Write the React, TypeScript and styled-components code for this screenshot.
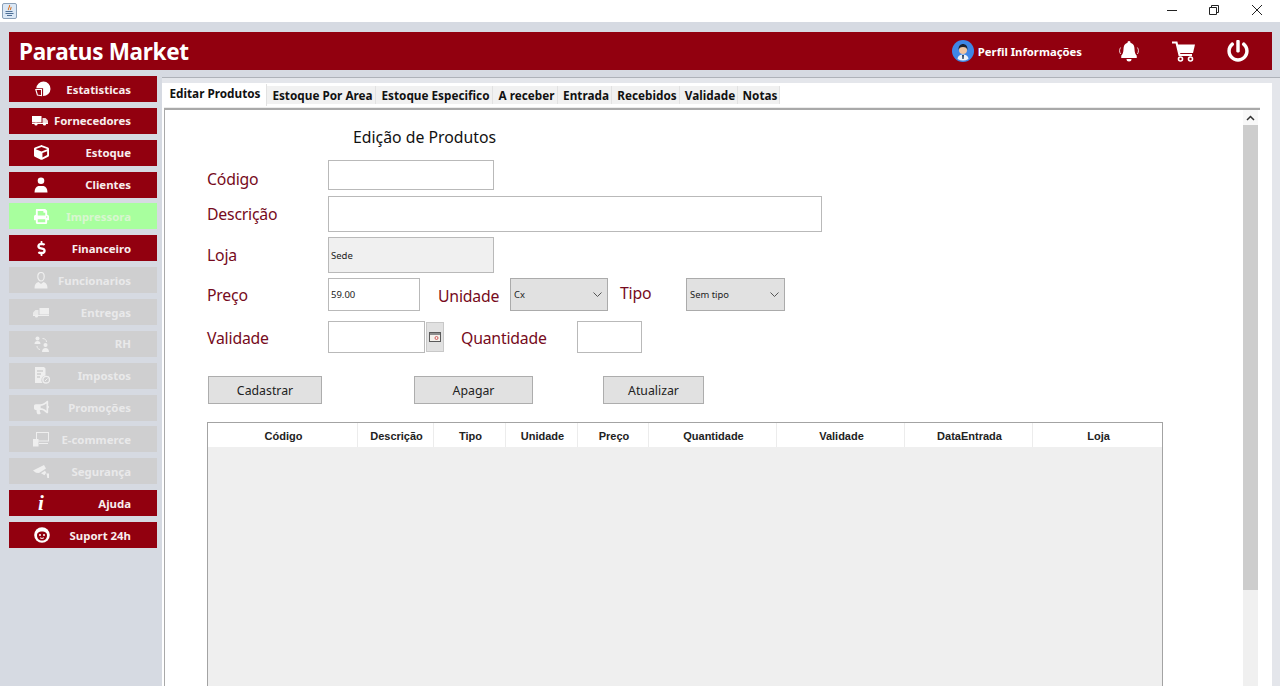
import React from "react";
import styled, { createGlobalStyle } from "styled-components";
import { FaCube, FaPrint, FaDollarSign, FaBullhorn, FaPowerOff } from "react-icons/fa";

const Global = createGlobalStyle`
  html, body { margin: 0; padding: 0; overflow: hidden; }
  body { font-family: "Noto Sans", "DejaVu Sans", sans-serif; background: #d6dae2; }
  * { box-sizing: border-box; }
`;

const Page = styled.div`
  width: 1280px; height: 686px; overflow: hidden;
  display: flex; flex-direction: column; background: #d6dae2;
`;
const TitleBar = styled.div`
  height: 22px; flex: none; background: #fff;
  display: flex; align-items: center; justify-content: space-between; padding: 0 16px 0 2px;
`;
const WindowControls = styled.div`
  display: flex; align-items: center; gap: 30px; color: #222; margin-top: -2px;
`;
const Body = styled.div`
  flex: 1; min-height: 0; display: flex; flex-direction: column; padding: 10px 0 0 9px;
`;
const Header = styled.header`
  height: 38px; flex: none; margin-right: 8px; background: #92000f; color: #fff;
  display: flex; align-items: center; padding: 0 23px 0 10px;
`;
const Brand = styled.div`
  font-size: 22.5px; font-weight: 700; flex: 1; letter-spacing: -0.3px;
`;
const Profile = styled.div`
  display: flex; align-items: center; gap: 4px; font-size: 11.3px; font-weight: 700; margin-right: 36px;
`;
const HeaderIcons = styled.div`
  display: flex; align-items: center; gap: 32px; color: #fff;
`;
const Content = styled.div`
  flex: 1; min-height: 0; display: flex; margin-top: 6px;
`;
const Sidebar = styled.nav`
  width: 148px; flex: none; display: flex; flex-direction: column; gap: 5.86px;
`;
const SideButton = styled.div<{ $state: "on" | "off" | "active" }>`
  height: 26px; flex: none; display: flex; align-items: center; justify-content: space-between;
  padding: 0 26px 0 22px; font-size: 11.4px; font-weight: 700; white-space: nowrap;
  background: ${(p) => (p.$state === "on" ? "#92000f" : p.$state === "active" ? "#a8ff9e" : "#cfcfd0")};
  color: ${(p) => (p.$state === "on" ? "#f8eeee" : p.$state === "active" ? "#d8f6d0" : "#e9e9ea")};
`;
const SideIcon = styled.span<{ $dim?: boolean }>`
  width: 20px; display: flex; justify-content: center; align-items: center; font-size: 15px;
  color: ${(p) => (p.$dim ? "#efefef" : "#fff")};
`;
const InfoGlyph = styled.span`
  font: italic 700 21px/20px "Liberation Serif", serif; color: #fff;
`;
const Main = styled.main`
  flex: 1; min-width: 0; margin: 1px 0 0 5px; border-top: 1px solid #aeb2b9;
  padding: 5px 8px 0 0; background: #e4e6eb; display: flex;
`;
const Panel = styled.div`
  flex: 1; min-width: 0; background: #fff; padding: 0 12px 0 2px; display: flex; flex-direction: column;
`;
const TabStrip = styled.div`
  height: 25px; flex: none; display: flex; align-items: flex-start; padding-top: 3px;
  border-bottom: 1px solid #ececec;
`;
const Tab = styled.div<{ $active?: boolean; $w: number }>`
  width: ${(p) => p.$w}px;
  height: ${(p) => (p.$active ? "22px" : "18px")};
  margin-top: ${(p) => (p.$active ? "-2px" : "0")};
  background: ${(p) => (p.$active ? "#fff" : "#f1f1f1")};
  border-right: 1px solid #e2e2e2;
  color: #111; font-size: 11.75px; font-weight: 700; white-space: nowrap;
  display: flex; align-items: center; justify-content: center;
  padding: ${(p) => (p.$active ? "0 0 4px 0" : "0 0 0 3px")};
`;
const Workspace = styled.div`
  flex: 1; min-height: 0; display: flex; border-top: 2px solid #a9a9a9; border-left: 1px solid #a9a9a9;
`;
const Form = styled.div`
  flex: 1; min-width: 0; padding-left: 42px; display: flex; flex-direction: column; overflow: hidden;
`;
const FormTitle = styled.h1`
  height: 50px; flex: none; margin: 0; padding: 16px 0 0 146px; font-size: 15.8px; line-height: 22px; font-weight: 400; color: #111;
`;
const Row = styled.div<{ $h: number; $gap: number }>`
  height: ${(p) => p.$h}px; margin-bottom: ${(p) => p.$gap}px; flex: none; display: flex; align-items: center;
`;
const Label = styled.label<{ $w?: number; $ml?: number; $dy?: number }>`
  width: ${(p) => p.$w ?? 121}px; margin-left: ${(p) => p.$ml ?? 0}px; flex: none;
  font-size: 15.8px; letter-spacing: -0.2px; color: #760a20; position: relative; top: ${(p) => p.$dy ?? 0}px; white-space: nowrap;
`;
const Field = styled.input<{ $w: number; $gray?: boolean }>`
  width: ${(p) => p.$w}px; height: 100%; border: 1px solid #b9b9b9; padding: 0 2px;
  font: 9.5px "Noto Sans", sans-serif; color: #222; outline: none;
  background: ${(p) => (p.$gray ? "#f0f0f0" : "#fff")};
`;
const CalButton = styled.div`
  width: 18px; height: 30px; margin-left: 1px; background: #e1e1e1; border: 1px solid #c8c8c8;
  display: flex; align-items: center; justify-content: center;
`;
const Select = styled.div<{ $w: number; $ml?: number }>`
  width: ${(p) => p.$w}px; height: 100%; margin-left: ${(p) => p.$ml ?? 0}px; flex: none;
  background: #e1e1e1; border: 1px solid #ababab; color: #222; font-size: 9.4px;
  display: flex; align-items: center; justify-content: space-between; padding: 0 5px 0 3px;
`;
const ButtonRow = styled.div`
  height: 28px; margin: 0 0 18px 1px; flex: none; display: flex;
`;
const ActionButton = styled.div<{ $w: number; $mr?: number }>`
  width: ${(p) => p.$w}px; margin-right: ${(p) => p.$mr ?? 0}px; background: #e1e1e1; border: 1px solid #adadad;
  font-size: 12.3px; color: #222; display: flex; align-items: center; justify-content: center;
`;
const Table = styled.div`
  width: 956px; flex: 1; min-height: 300px; border: 1px solid #a3a3a3; background: #efefef;
`;
const TableHead = styled.div`
  height: 24px; background: #fff; display: grid;
  grid-template-columns: 150px 76px 72px 72px 71px 128px 128px 128px 129px;
`;
const HeadCell = styled.div`
  border-right: 1px solid #ececec; font: 700 11px "Liberation Sans", Arial, sans-serif; color: #222;
  display: flex; align-items: center; justify-content: center; padding: 2px 0 0 2px;
  &:last-child { border-right: none; }
`;
const Scrollbar = styled.div`
  width: 15px; flex: none; margin-right: 2px; background: #f0f0f0; display: flex; flex-direction: column;
`;
const ScrollArrow = styled.div`
  height: 15px; display: flex; align-items: center; justify-content: center; background: #f8f8f8;
`;
const ScrollThumb = styled.div`
  height: 465px; background: #cdcdcd;
`;

const JavaIcon = () => (
  <svg width="15" height="16" viewBox="0 0 15 16">
    <rect x="0.5" y="0.5" width="14" height="15" rx="1.5" fill="#dbe8f6" stroke="#8aa0b8" />
    <path d="M7.500 2c1 2-2 3-1 5M9 4c.5 1-1 2-.5 3" stroke="#d9772a" strokeWidth="1.100" fill="none" />
    <path d="M3.500 8.500h7M3.500 10.500h8M5 12.500h5" stroke="#4d6f96" strokeWidth="1" fill="none" />
  </svg>
);

const Chevron = () => (
  <svg width="9" height="5" viewBox="0 0 9 5"><path d="M.5.500l4 4 4-4" fill="none" stroke="#555" strokeWidth="1" /></svg>
);

const Avatar = () => (
  <svg width="22" height="22" viewBox="0 0 22 22">
    <circle cx="11" cy="11" r="11" fill="#3f87e6" />
    <path d="M5.500 19c.5-3.500 3-4.500 5.500-4.500s5 1 5.500 4.500a11 11 0 0 1-11 0z" fill="#eef3f7" />
    <path d="M10 15h2l-.4 4h-1.200z" fill="#27425f" />
    <circle cx="11" cy="10" r="4" fill="#f0c6a0" />
    <path d="M6.600 10c-.5-4 2-6 4.400-6s5 2 4.400 6c-.5-2-1.500-3-4.400-3s-3.900 1-4.400 3z" fill="#1e2430" />
  </svg>
);

const Bell = () => (
  <svg width="22" height="22" viewBox="0 0 22 22" fill="#fff">
    <path d="M11 1a1.500 1.500 0 0 1 1.500 1.700C15.500 3.500 16.500 6 16.500 9c0 3.500 1 5.500 2.500 7H3c1.500-1.500 2.500-3.500 2.500-7 0-3 1-5.500 4-6.300A1.500 1.500 0 0 1 11 1z" />
    <rect x="3" y="16" width="16" height="2" rx="1" />
    <path d="M8.500 19h5a2.500 2.500 0 0 1-5 0z" />
    <path d="M2.600 7.500C1.200 9.500 1.200 12 2.600 14M19.400 7.500c1.400 2 1.400 4.500 0 6.500" fill="none" stroke="#fff" strokeWidth="1" opacity="0.8" />
  </svg>
);

const Cart = () => (
  <svg width="23" height="21" viewBox="0 0 23 21">
    <path d="M0 1.500h4.500l3 12.500h12.500" fill="none" stroke="#fff" strokeWidth="2.200" />
    <path d="M5.500 3.500H23l-2 8.500H7.500z" fill="#fff" />
    <circle cx="8.500" cy="18" r="2" fill="none" stroke="#fff" strokeWidth="1.600" />
    <circle cx="18.500" cy="18" r="2" fill="none" stroke="#fff" strokeWidth="1.600" />
  </svg>
);

const Pie = () => (
  <svg width="16" height="16" viewBox="0 0 16 16" style={{ marginLeft: 3 }}>
    <path d="M8.500 0.500a7.200 7.200 0 1 1-.4 14.400V7.200H1.300A7.200 7.200 0 0 1 8.500 0.500z" fill="currentColor" />
    <path d="M.8 8.500h5.700v6.200L2.400 14z" fill="none" stroke="currentColor" strokeWidth="1.100" />
  </svg>
);
const Truck = ({ flip }: { flip?: boolean }) => (
  <svg width="16" height="11" viewBox="0 0 16 11" style={flip ? { transform: "scaleX(-1)" } : { marginLeft: -3 }}>
    <rect x="0" y="1" width="9.500" height="6.500" fill="currentColor" />
    <path d="M10.500 3h3l2.500 2.500v2.500h-5.500z" fill="currentColor" opacity="0.85" />
    <rect x="0" y="8" width="16" height="1" fill="currentColor" />
    <circle cx="12.500" cy="9" r="1.600" fill="currentColor" />
    {!flip && <circle cx="4" cy="9" r="1.600" fill="currentColor" />}
  </svg>
);
const Person = () => (
  <svg width="14" height="16" viewBox="0 0 14 16" fill="currentColor">
    <circle cx="7" cy="3.800" r="3.300" />
    <path d="M.5 15.500c.2-4 1.500-6 3.800-6.500h5.400c2.300.5 3.600 2.500 3.800 6.500z" />
  </svg>
);
const Employee = () => (
  <svg width="14" height="17" viewBox="0 0 14 17" fill="currentColor">
    <path d="M3.800 4.500c0-2.500 1.400-4 3.200-4s3.200 1.500 3.200 4-1.400 4.500-3.200 4.500-3.200-2-3.200-4.500z" fill="none" stroke="currentColor" strokeWidth="1.200" />
    <path d="M.5 16.500c0-4 1.500-6 4-6.500l2.500 2 2.500-2c2.500.5 4 2.500 4 6.500z" />
  </svg>
);
const Staff = () => (
  <svg width="16" height="16" viewBox="0 0 16 16" fill="currentColor" style={{ marginLeft: 2 }}>
    <circle cx="3.500" cy="2.500" r="2" />
    <path d="M.5 8c0-2 1.200-3 3-3s3 1 3 3z" />
    <circle cx="11.500" cy="9" r="2" />
    <path d="M8 16c0-2.500 1.500-4 3.500-4s3.500 1.500 3.500 4z" />
    <path d="M8.500 2.500c2.500 0 4 1.500 4 3.500M3 10c0 2 1 3 3 3.500" fill="none" stroke="currentColor" strokeWidth="1" />
  </svg>
);
const TaxDoc = () => (
  <svg width="15" height="17" viewBox="0 0 15 17" fill="currentColor" style={{ marginLeft: 2 }}>
    <path d="M0 0h9l1.500 1.500v7a4.500 4.500 0 0 0-3 7.500H0z" />
    <path d="M2 4h6M2 7h4M2 10h3" stroke="#cfcfd0" strokeWidth="1.300" />
    <circle cx="11.200" cy="12.700" r="3.300" fill="none" stroke="currentColor" strokeWidth="1.400" />
    <path d="M10 14l2.500-2.500" stroke="currentColor" strokeWidth="1" />
  </svg>
);
const Monitor = () => (
  <svg width="16" height="16" viewBox="0 0 16 16" fill="none" stroke="currentColor">
    <rect x="3.500" y="1.500" width="12" height="8.500" strokeWidth="1" />
    <path d="M6 12.500h9" strokeWidth="1" />
    <rect x="0" y="8" width="5.500" height="7.500" fill="currentColor" stroke="none" />
  </svg>
);
const Camera = () => (
  <svg width="16" height="13" viewBox="0 0 16 13" fill="currentColor">
    <path d="M0 5.500L11 0l2 3.500-7 4.500L3 7.800z" />
    <path d="M8 8.200l4-2.400 1.500 2.400.8 4.800h1.700V8.500h-1.500L13 8l-1.500 2.200z" />
  </svg>
);
const SupportFace = () => (
  <svg width="16" height="16" viewBox="0 0 16 16" style={{ marginLeft: 2 }}>
    <circle cx="8" cy="8" r="7.800" fill="#fff" />
    <path d="M3 8.500C3 5.500 5 4.500 8 4.500s5 1 5 4-2 5-5 5-5-2-5-5z" fill="#92000f" />
    <circle cx="6" cy="8" r="1" fill="#fff" />
    <circle cx="10" cy="8" r="1" fill="#fff" />
    <path d="M6 10.700c1 .9 3 .9 4 0" stroke="#fff" strokeWidth="1" fill="none" />
  </svg>
);

type SideState = "on" | "off" | "active";
const sideItems: { label: string; icon: React.ReactNode; state: SideState }[] = [
  { label: "Estatisticas", icon: <Pie />, state: "on" },
  { label: "Fornecedores", icon: <Truck />, state: "on" },
  { label: "Estoque", icon: <FaCube />, state: "on" },
  { label: "Clientes", icon: <Person />, state: "on" },
  { label: "Impressora", icon: <FaPrint />, state: "active" },
  { label: "Financeiro", icon: <FaDollarSign />, state: "on" },
  { label: "Funcionarios", icon: <Employee />, state: "off" },
  { label: "Entregas", icon: <Truck flip />, state: "off" },
  { label: "RH", icon: <Staff />, state: "off" },
  { label: "Impostos", icon: <TaxDoc />, state: "off" },
  { label: "Promoções", icon: <FaBullhorn />, state: "off" },
  { label: "E-commerce", icon: <Monitor />, state: "off" },
  { label: "Segurança", icon: <Camera />, state: "off" },
  { label: "Ajuda", icon: <InfoGlyph>i</InfoGlyph>, state: "on" },
  { label: "Suport 24h", icon: <SupportFace />, state: "on" },
];

const tabs: [string, number][] = [
  ["Estoque Por Area", 109], ["Estoque Especifico", 117], ["A receber", 65], ["Entrada", 54],
  ["Recebidos", 68], ["Validade", 58], ["Notas", 42],
];
const columns = ["Código", "Descrição", "Tipo", "Unidade", "Preço", "Quantidade", "Validade", "DataEntrada", "Loja"];

export default function App() {
  return (
    <Page>
      <Global />
      <TitleBar>
        <JavaIcon />
        <WindowControls>
          <svg width="12" height="12" viewBox="0 0 12 12"><path d="M1 6.500h10" stroke="#222" /></svg>
          <svg width="12" height="12" viewBox="0 0 12 12"><path d="M1.500 3.500h7v7h-7zM3.500 3.500v-2h7v7h-2" fill="none" stroke="#222" /></svg>
          <svg width="14" height="14" viewBox="0 0 14 14"><path d="M2 2l10 10M12 2L2 12" stroke="#222" /></svg>
        </WindowControls>
      </TitleBar>
      <Body>
        <Header>
          <Brand>Paratus Market</Brand>
          <Profile><Avatar />Perfil Informações</Profile>
          <HeaderIcons>
            <Bell />
            <Cart />
            <FaPowerOff size={22} />
          </HeaderIcons>
        </Header>
        <Content>
          <Sidebar>
            {sideItems.map((item) => (
              <SideButton key={item.label} $state={item.state}>
                <SideIcon $dim={item.state === "off"}>{item.icon}</SideIcon>
                <span>{item.label}</span>
              </SideButton>
            ))}
          </Sidebar>
          <Main>
            <Panel>
              <TabStrip>
                <Tab $active $w={103}>Editar Produtos</Tab>
                {tabs.map(([name, width]) => (
                  <Tab key={name} $w={width}>{name}</Tab>
                ))}
              </TabStrip>
              <Workspace>
                <Form>
                  <FormTitle>Edição de Produtos</FormTitle>
                  <Row $h={30} $gap={6}>
                    <Label $dy={4}>Código</Label>
                    <Field $w={166} readOnly />
                  </Row>
                  <Row $h={36} $gap={5}>
                    <Label>Descrição</Label>
                    <Field $w={494} readOnly />
                  </Row>
                  <Row $h={36} $gap={5}>
                    <Label>Loja</Label>
                    <Field $w={166} $gray readOnly value="Sede" />
                  </Row>
                  <Row $h={33} $gap={10}>
                    <Label>Preço</Label>
                    <Field $w={92} readOnly value="59.00" />
                    <Label $w={72} $ml={18} $dy={1}>Unidade</Label>
                    <Select $w={98}>Cx<Chevron /></Select>
                    <Label $w={66} $ml={12} $dy={-2}>Tipo</Label>
                    <Select $w={99}>Sem tipo<Chevron /></Select>
                  </Row>
                  <Row $h={32} $gap={23}>
                    <Label $dy={1}>Validade</Label>
                    <Field $w={97} readOnly />
                    <CalButton>
                      <svg width="12" height="10" viewBox="0 0 12 10">
                        <rect x="0.500" y="0.500" width="11" height="9" fill="#f4f1ec" stroke="#5a5a5a" />
                        <path d="M1 1h10v2H1z" fill="#8d8d8d" />
                        <circle cx="7.500" cy="6" r="1.500" fill="none" stroke="#d25a5a" />
                      </svg>
                    </CalButton>
                    <Label $w={116} $ml={17} $dy={1}>Quantidade</Label>
                    <Field $w={65} readOnly />
                  </Row>
                  <ButtonRow>
                    <ActionButton $w={114} $mr={92}>Cadastrar</ActionButton>
                    <ActionButton $w={119} $mr={70}>Apagar</ActionButton>
                    <ActionButton $w={101}>Atualizar</ActionButton>
                  </ButtonRow>
                  <Table>
                    <TableHead>
                      {columns.map((c) => <HeadCell key={c}>{c}</HeadCell>)}
                    </TableHead>
                  </Table>
                </Form>
                <Scrollbar>
                  <ScrollArrow>
                    <svg width="9" height="6" viewBox="0 0 9 6"><path d="M1 5l3.500-3.500L8 5" fill="none" stroke="#333" strokeWidth="1.500" /></svg>
                  </ScrollArrow>
                  <ScrollThumb />
                </Scrollbar>
              </Workspace>
            </Panel>
          </Main>
        </Content>
      </Body>
    </Page>
  );
}
